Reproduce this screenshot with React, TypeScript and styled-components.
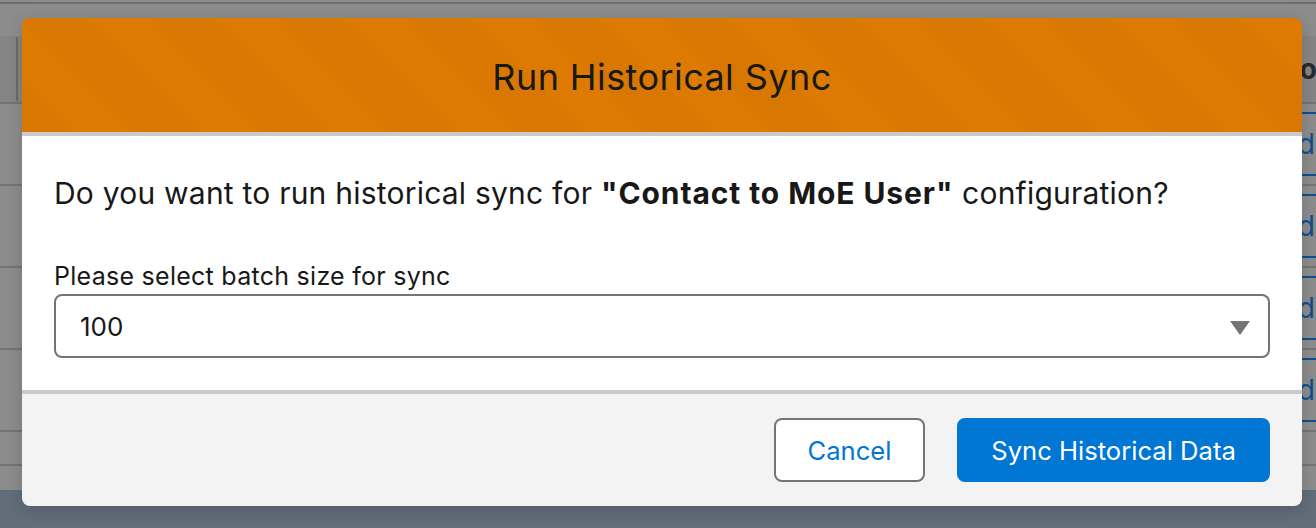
import React from 'react';
import styled, { createGlobalStyle } from 'styled-components';

const GlobalStyle = createGlobalStyle`
  html, body {
    margin: 0;
    padding: 0;
    background: #8c8c8c;
    font-family: Inter, "Liberation Sans", sans-serif;
  }
`;

const Page = styled.div`
  position: relative;
  width: 1316px;
  height: 528px;
  overflow: hidden;
  background: #626d7a;
`;

const TopBar = styled.div`
  height: 36px;
  box-sizing: border-box;
  padding-top: 2px;
  background: #8c8c8c;
  &::before {
    content: '';
    display: block;
    height: 2px;
    background: #6e6e6e;
  }
`;

const TableHead = styled.div`
  height: 66px;
  padding: 0 0 0 16px;
  display: flex;
  align-items: center;
  justify-content: space-between;
  background: #858585;
  border-bottom: 2px solid #747474;
`;

const ColumnGrip = styled.div`
  width: 2px;
  height: 64px;
  background: #6a6a6a;
`;

const HeadText = styled.span`
  font-size: 28px;
  font-weight: 700;
  color: #2a2a2a;
  margin-right: -1px;
`;

const Row = styled.div<{ $h?: number; $last?: boolean }>`
  height: ${p => p.$h ?? 80}px;
  background: #8c8c8c;
  border-bottom: ${p => (p.$last ? 'none' : '2px solid #747474')};
  display: flex;
  align-items: center;
  justify-content: flex-end;
`;

const RowAction = styled.div`
  width: 100%;
  height: 60px;
  display: flex;
  align-items: center;
  justify-content: flex-end;
  border-top: 2px solid #0f4e8f;
  border-bottom: 2px solid #0f4e8f;
  margin-left: 1302px;
  font-size: 28px;
  color: #0f4e8f;
  padding-right: 1px;
`;

const Modal = styled.div`
  position: absolute;
  left: 22px;
  top: 18px;
  width: 1280px;
  height: 488px;
  display: flex;
  flex-direction: column;
  border-radius: 8px;
  overflow: hidden;
  box-shadow: 0 4px 16px rgba(0, 0, 0, 0.16);
`;

const Header = styled.header`
  height: 114px;
  flex: none;
  box-sizing: border-box;
  padding-top: 3px;
  display: flex;
  align-items: center;
  justify-content: center;
  background-color: #dd7a01;
  background-image: linear-gradient(
    45deg,
    rgba(0, 0, 0, 0.025) 25%,
    transparent 25%,
    transparent 50%,
    rgba(0, 0, 0, 0.025) 50%,
    rgba(0, 0, 0, 0.025) 75%,
    transparent 75%,
    transparent
  );
  background-size: 128px 128px;
`;

const HeaderRule = styled.div`
  height: 4px;
  flex: none;
  background: #c9c9c9;
`;

const Title = styled.h2`
  margin: 0;
  font-size: 36px;
  font-weight: 400;
  letter-spacing: 0.42px;
  color: #181818;
`;

const Body = styled.div`
  flex: 1;
  background: #fff;
  padding: 38px 32px 0;
`;

const Question = styled.p`
  margin: 0 0 49px;
  font-size: 30px;
  line-height: 38px;
  letter-spacing: 0.22px;
  color: #181818;
`;

const ConfigName = styled.strong`
  font-weight: 700;
  letter-spacing: 0.91px;
`;

const Label = styled.label`
  display: block;
  font-size: 25px;
  line-height: 30px;
  letter-spacing: 0.27px;
  margin-bottom: 3px;
  color: #181818;
`;

const SelectBox = styled.div`
  height: 64px;
  box-sizing: border-box;
  display: flex;
  align-items: center;
  justify-content: space-between;
  padding: 0 18px 0 24px;
  border: 2px solid #747474;
  border-radius: 8px;
  background: #fff;
  font-size: 26px;
  color: #181818;
`;

const Caret = styled.svg`
  width: 20px;
  height: 14px;
  margin-top: 4px;
  fill: #747474;
`;

const Footer = styled.footer`
  height: 116px;
  flex: none;
  box-sizing: border-box;
  display: flex;
  align-items: center;
  justify-content: flex-end;
  gap: 32px;
  padding: 0 32px;
  background: #f3f3f3;
  border-top: 4px solid #c9c9c9;
`;

const Button = styled.button<{ $primary?: boolean }>`
  width: ${p => (p.$primary ? 313 : 151)}px;
  height: 64px;
  padding: 0;
  border-radius: 8px;
  border: 2px solid ${p => (p.$primary ? '#0176d3' : '#747474')};
  background: ${p => (p.$primary ? '#0176d3' : '#fff')};
  color: ${p => (p.$primary ? '#fff' : '#0176d3')};
  font-family: inherit;
  font-size: 25.6px;
`;

const ROWS = [0, 1, 2, 3];

export default function App() {
  return (
    <Page>
      <GlobalStyle />
      <TopBar />
      <TableHead>
        <ColumnGrip />
        <HeadText>o</HeadText>
      </TableHead>
      {ROWS.map(i => (
        <Row key={i}>
          <RowAction>d</RowAction>
        </Row>
      ))}
      <Row $h={32} />
      <Row $h={24} $last />
      <Modal role="dialog">
        <Header>
          <Title>Run Historical Sync</Title>
        </Header>
        <HeaderRule />
        <Body>
          <Question>
            Do you want to run historical sync for <ConfigName>"Contact to MoE User"</ConfigName> configuration?
          </Question>
          <Label>Please select batch size for sync</Label>
          <SelectBox>
            100
            <Caret viewBox="0 0 20 14" aria-hidden="true">
              <path d="M0 0h20L10 14z" />
            </Caret>
          </SelectBox>
        </Body>
        <Footer>
          <Button>Cancel</Button>
          <Button $primary>Sync Historical Data</Button>
        </Footer>
      </Modal>
    </Page>
  );
}
